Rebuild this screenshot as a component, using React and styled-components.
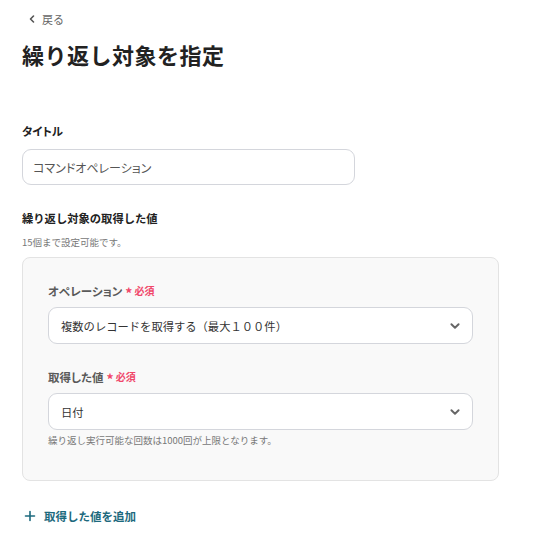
import React from "react";
import styled, { createGlobalStyle, css } from "styled-components";

const Global = createGlobalStyle`
  html, body { margin: 0; padding: 0; background: #fff; }
  body {
    font-family: "Noto Sans CJK JP", "Noto Sans", sans-serif;
    color: #222;
  }
`;

/* proportional kana spacing for katakana-heavy strings */
const proportional = css`
  font-feature-settings: "palt";
`;

const Page = styled.div`
  width: 538px;
  padding: 10px 22px 0 22px;
  box-sizing: border-box;
  display: flex;
  flex-direction: column;
`;

const BackLink = styled.a`
  display: flex;
  align-self: flex-start;
  align-items: center;
  gap: 5px;
  margin-left: 5px;
  height: 18px;
  font-size: 11px;
  color: #666;
  text-decoration: none;
  cursor: pointer;
`;

const Title = styled.h1`
  margin: 10px 0 0 0;
  font-size: 22px;
  font-weight: 700;
  line-height: 32px;
  color: #222;
  letter-spacing: 0.5px;
`;

const Section = styled.section`
  margin-top: ${(p) => p.$top}px;
  display: flex;
  flex-direction: column;
`;

const Label = styled.div`
  font-size: 11.3px;
  font-weight: 700;
  line-height: 18px;
  color: #222;
  ${(p) => p.$kana && proportional}
`;

const Note = styled.div`
  font-size: 9.5px;
  line-height: 14px;
  color: #777;
  margin-top: ${(p) => p.$top || 0}px;
`;

const TextInput = styled.input`
  margin-top: 9px;
  width: 333px;
  height: 36px;
  box-sizing: border-box;
  border: 1px solid #d4d6dc;
  border-radius: 9px;
  padding: 0 10px;
  font-family: inherit;
  ${proportional}
  font-size: 12px;
  color: #555;
  background: #fff;
  outline: none;
`;

const Panel = styled.div`
  margin-top: 8px;
  width: 477px;
  box-sizing: border-box;
  background: #f9f9f9;
  border: 1px solid #e3e3e3;
  border-radius: 8px;
  padding: 24px 25px 33px 25px;
  display: flex;
  flex-direction: column;
  gap: 24px;
`;

const Field = styled.div`
  display: flex;
  flex-direction: column;
`;

const FieldLabel = styled.div`
  font-size: 11.5px;
  font-weight: 700;
  color: #5a5a5a;
  line-height: 18px;
  display: flex;
  align-items: center;
  gap: 3px;
  ${proportional}
`;

const Required = styled.span`
  color: #f0476a;
  font-size: 10px;
  font-weight: 700;
  display: inline-flex;
  align-items: center;
  gap: 2px;
`;

const Star = styled.span`
  font-size: 14px;
  line-height: 10px;
  margin-top: 3px;
`;

const Select = styled.div`
  margin-top: 7px;
  height: 37px;
  box-sizing: border-box;
  background: #fff;
  border: 1px solid #d4d6dc;
  border-radius: 9px;
  padding: 0 11px 0 12px;
  display: flex;
  align-items: center;
  justify-content: space-between;
  font-size: 11.3px;
  color: #333;
  cursor: pointer;
`;

const AddButton = styled.button`
  margin-top: 27px;
  margin-left: 2px;
  display: inline-flex;
  align-items: center;
  gap: 8px;
  border: none;
  background: none;
  padding: 0;
  font-family: inherit;
  font-size: 11.5px;
  font-weight: 700;
  color: #1d6a7e;
  cursor: pointer;
  align-self: flex-start;
`;

const Chevron = ({ size = 10, color = "#555", dir = "down" }) => (
  <svg
    width={size}
    height={size}
    viewBox="0 0 10 10"
    fill="none"
    stroke={color}
    strokeWidth="1.6"
    strokeLinecap="round"
    strokeLinejoin="round"
  >
    {dir === "down" ? (
      <path d="M2 3.5 L5 6.5 L8 3.5" />
    ) : (
      <path d="M6.5 2 L3.5 5 L6.5 8" />
    )}
  </svg>
);

const Plus = () => (
  <svg width="12" height="12" viewBox="0 0 12 12" stroke="#1d6a7e" strokeWidth="1.6" strokeLinecap="round">
    <path d="M6 1.5 V10.5 M1.5 6 H10.5" />
  </svg>
);

function SelectField({ label, value }) {
  return (
    <Field>
      <FieldLabel>
        {label}
        <Required>
          <Star>*</Star>必須
        </Required>
      </FieldLabel>
      <Select>
        <span>{value}</span>
        <Chevron size={12} color="#666" />
      </Select>
    </Field>
  );
}

export default function App() {
  return (
    <>
      <Global />
      <Page>
        <BackLink>
          <Chevron size={10} color="#555" dir="left" />
          戻る
        </BackLink>
        <Title>繰り返し対象を指定</Title>

        <Section $top={52}>
          <Label $kana>タイトル</Label>
          <TextInput defaultValue="コマンドオペレーション" />
        </Section>

        <Section $top={24}>
          <Label>繰り返し対象の取得した値</Label>
          <Note $top={8}>15個まで設定可能です。</Note>
          <Panel>
            <SelectField label="オペレーション" value="複数のレコードを取得する（最大１００件）" />
            <Field>
              <SelectField label="取得した値" value="日付" />
              <Note $top={3}>繰り返し実行可能な回数は1000回が上限となります。</Note>
            </Field>
          </Panel>
          <AddButton>
            <Plus />
            取得した値を追加
          </AddButton>
        </Section>
      </Page>
    </>
  );
}
